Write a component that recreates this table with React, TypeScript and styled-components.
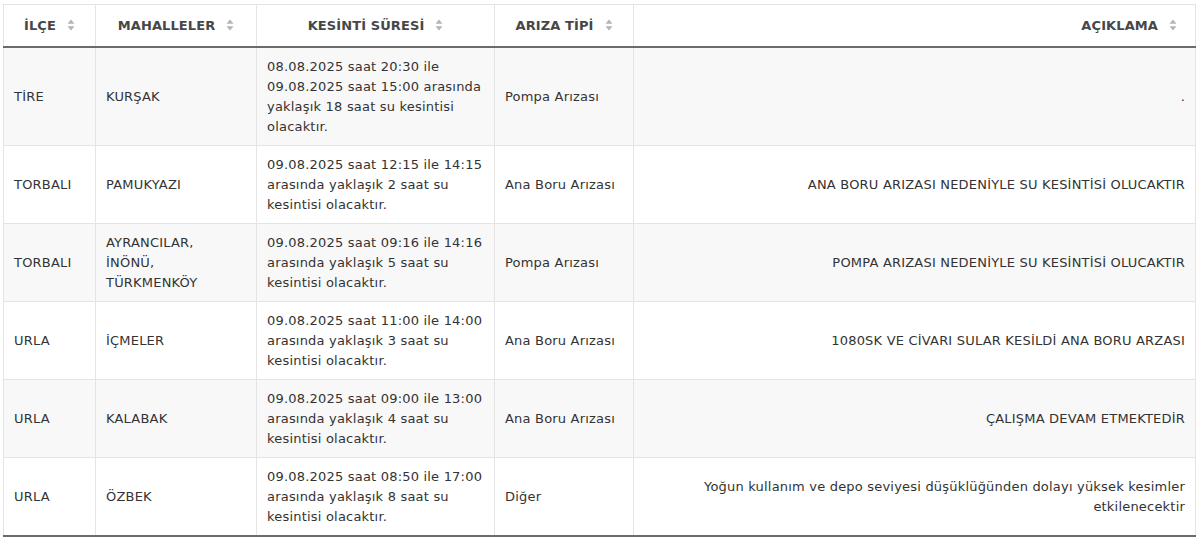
import React from "react";
import styled, { createGlobalStyle } from "styled-components";

const columns = [
  { id: 0, title: "İlçe", width: 92, align: "left" },
  { id: 1, title: "Mahalleler", width: 161, align: "left" },
  { id: 2, title: "Kesinti Süresi", width: 238, align: "left" },
  { id: 3, title: "Arıza Tipi", width: 139, align: "left" },
  { id: 4, title: "Açıklama", width: 0, align: "right" },
] as const;

const rows = [
  {
    id: 0,
    ilce: "TİRE",
    mahalleler: ["KURŞAK"],
    sure: "08.08.2025 saat 20:30 ile 09.08.2025 saat 15:00 arasında yaklaşık 18 saat su kesintisi olacaktır.",
    tip: "Pompa Arızası",
    aciklama: ".",
  },
  {
    id: 1,
    ilce: "TORBALI",
    mahalleler: ["PAMUKYAZI"],
    sure: "09.08.2025 saat 12:15 ile 14:15 arasında yaklaşık 2 saat su kesintisi olacaktır.",
    tip: "Ana Boru Arızası",
    aciklama: "ANA BORU ARIZASI NEDENİYLE SU KESİNTİSİ OLUCAKTIR",
  },
  {
    id: 2,
    ilce: "TORBALI",
    mahalleler: ["AYRANCILAR", "İNÖNÜ", "TÜRKMENKÖY"],
    sure: "09.08.2025 saat 09:16 ile 14:16 arasında yaklaşık 5 saat su kesintisi olacaktır.",
    tip: "Pompa Arızası",
    aciklama: "POMPA ARIZASI NEDENİYLE SU KESİNTİSİ OLUCAKTIR",
  },
  {
    id: 3,
    ilce: "URLA",
    mahalleler: ["İÇMELER"],
    sure: "09.08.2025 saat 11:00 ile 14:00 arasında yaklaşık 3 saat su kesintisi olacaktır.",
    tip: "Ana Boru Arızası",
    aciklama: "1080SK VE CİVARI SULAR KESİLDİ ANA BORU ARZASI",
  },
  {
    id: 4,
    ilce: "URLA",
    mahalleler: ["KALABAK"],
    sure: "09.08.2025 saat 09:00 ile 13:00 arasında yaklaşık 4 saat su kesintisi olacaktır.",
    tip: "Ana Boru Arızası",
    aciklama: "ÇALIŞMA DEVAM ETMEKTEDİR",
  },
  {
    id: 5,
    ilce: "URLA",
    mahalleler: ["ÖZBEK"],
    sure: "09.08.2025 saat 08:50 ile 17:00 arasında yaklaşık 8 saat su kesintisi olacaktır.",
    tip: "Diğer",
    aciklama: "Yoğun kullanım ve depo seviyesi düşüklüğünden dolayı yüksek kesimler etkilenecektir",
  },
];

function SortIcon() {
  return (
    <svg width="8" height="12" viewBox="0 0 8 12">
      <path d="M4 0.5 L7.5 4.8 L0.5 4.8 Z" fill="#b5b5b5" />
      <path d="M4 11.5 L7.5 7.2 L0.5 7.2 Z" fill="#b5b5b5" />
    </svg>
  );
}

export default function App() {
  return (
    <>
      <GlobalStyle />
      <Page>
        <Table>
          <colgroup>
            {columns.map((col) => (
              <Col key={col.id} $width={col.width} />
            ))}
          </colgroup>
          <thead>
            <tr>
              {columns.map((col) => (
                <HeadCell key={col.id} $align={col.align}>
                  <span className="label">{col.title.toLocaleUpperCase("tr-TR")}</span>
                  <SortIcon />
                </HeadCell>
              ))}
            </tr>
          </thead>
          <tbody>
            {rows.map((row) => (
              <Row key={row.id}>
                <Cell>{row.ilce}</Cell>
                <Cell>
                  {row.mahalleler.map((m, i) => (
                    <Neighbourhood key={m}>
                      {m}
                      {i < row.mahalleler.length - 1 ? "," : ""}
                    </Neighbourhood>
                  ))}
                </Cell>
                <Cell>{row.sure}</Cell>
                <Cell>{row.tip}</Cell>
                <Cell $align="right">{row.aciklama}</Cell>
              </Row>
            ))}
          </tbody>
        </Table>
      </Page>
    </>
  );
}

const GlobalStyle = createGlobalStyle`
  body {
    margin: 0;
    background: #ffffff;
    font-family: "DejaVu Sans", "Noto Sans", sans-serif;
  }
`;

const Page = styled.div`
  padding: 4px 4px 0 3px;
`;

const Table = styled.table`
  width: 100%;
  table-layout: fixed;
  border-collapse: collapse;
  border: 1px solid #e4e4e4;
  border-bottom: 2px solid #6b6b6b;
  font-size: 13px;
  letter-spacing: 0.2px;
  color: #333333;
`;

const Col = styled.col<{ $width: number }>`
  width: ${(p) => (p.$width ? `${p.$width}px` : "auto")};
`;

const HeadCell = styled.th<{ $align: string }>`
  height: 41px;
  padding: ${(p) => (p.$align === "right" ? "0 18px 0 10px" : "0 10px")};
  border-right: 1px solid #e4e4e4;
  border-bottom: 2px solid #6b6b6b;
  text-align: ${(p) => (p.$align === "right" ? "right" : "center")};
  font-weight: 700;
  font-size: 13px;
  letter-spacing: 0.1px;
  color: #474747;
  white-space: nowrap;

  .label {
    margin-right: 11px;
  }

  svg {
    vertical-align: -1px;
  }
`;

const Row = styled.tr`
  &:nth-child(odd) {
    background: #f9f8f9;
  }
`;

const Cell = styled.td<{ $align?: string }>`
  padding: 9px 10px 8px;
  line-height: 20px;
  border-right: 1px solid #e4e4e4;
  border-bottom: 1px solid #e4e4e4;
  text-align: ${(p) => p.$align || "left"};
  vertical-align: middle;
`;

const Neighbourhood = styled.span`
  display: block;
`;
